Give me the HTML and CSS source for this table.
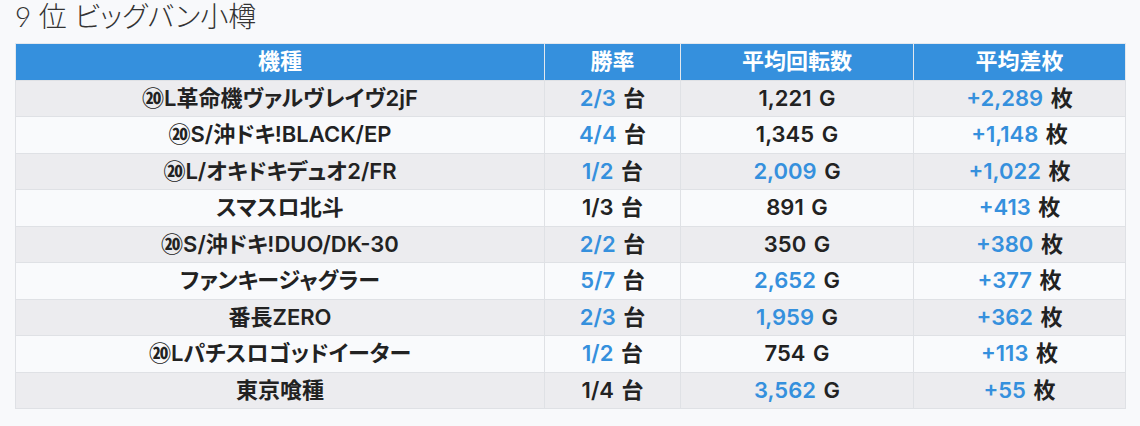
FILE: index.html
```html
<!DOCTYPE html>
<html lang="ja">
<head>
<meta charset="utf-8">
<link rel="stylesheet" href="styles.css">
</head>
<body>
<div class="page">
  <h2 class="title">9 位 ビッグバン小樽</h2>
  <table class="ranking">
    <colgroup>
      <col class="c-name"><col class="c-rate"><col class="c-spin"><col class="c-diff">
    </colgroup>
    <thead>
      <tr><th>機種</th><th>勝率</th><th>平均回転数</th><th>平均差枚</th></tr>
    </thead>
    <tbody>
      <tr><td>⑳L革命機ヴァルヴレイヴ2jF</td><td><span class="hl">2/3</span> 台</td><td>1,221 G</td><td><span class="hl">+2,289</span> 枚</td></tr>
      <tr><td>⑳S/沖ドキ!BLACK/EP</td><td><span class="hl">4/4</span> 台</td><td>1,345 G</td><td><span class="hl">+1,148</span> 枚</td></tr>
      <tr><td>⑳L/オキドキデュオ2/FR</td><td><span class="hl">1/2</span> 台</td><td><span class="hl">2,009</span> G</td><td><span class="hl">+1,022</span> 枚</td></tr>
      <tr><td>スマスロ北斗</td><td>1/3 台</td><td>891 G</td><td><span class="hl">+413</span> 枚</td></tr>
      <tr><td>⑳S/沖ドキ!DUO/DK-30</td><td><span class="hl">2/2</span> 台</td><td>350 G</td><td><span class="hl">+380</span> 枚</td></tr>
      <tr><td>ファンキージャグラー</td><td><span class="hl">5/7</span> 台</td><td><span class="hl">2,652</span> G</td><td><span class="hl">+377</span> 枚</td></tr>
      <tr><td>番長ZERO</td><td><span class="hl">2/3</span> 台</td><td><span class="hl">1,959</span> G</td><td><span class="hl">+362</span> 枚</td></tr>
      <tr><td>⑳Lパチスロゴッドイーター</td><td><span class="hl">1/2</span> 台</td><td>754 G</td><td><span class="hl">+113</span> 枚</td></tr>
      <tr><td>東京喰種</td><td>1/4 台</td><td><span class="hl">3,562</span> G</td><td><span class="hl">+55</span> 枚</td></tr>
    </tbody>
  </table>
</div>
</body>
</html>
```

FILE: styles.css
```css
html, body {
  margin: 0;
  padding: 0;
  background: #f8f9fb;
}
body {
  font-family: Inter, "Noto Sans CJK JP", sans-serif;
  font-feature-settings: "palt";
  color: #222;
}
.page {
  padding: 0 15px;
}
.title {
  margin: 0 0 11px;
  height: 32px;
  font-family: Lato, "Noto Sans CJK JP", sans-serif;
  font-weight: 300;
  font-size: 28px;
  line-height: 32px;
  color: #333;
}
.ranking {
  width: 1110px;
  border-collapse: collapse;
  table-layout: fixed;
  font-size: 22px;
}
.c-name { width: 529px; }
.c-rate { width: 136px; }
.c-spin { width: 233px; }
.c-diff { width: 212px; }
.ranking th,
.ranking td {
  border: 1px solid #dfe1e5;
  text-align: center;
  padding: 5px 8px;
  line-height: 25.5px;
  font-weight: 600;
  white-space: nowrap;
  word-spacing: 2px;
}
.ranking th {
  background: #3590dd;
  color: #fff;
  font-weight: 700;
  border-top-color: #e3e8ee;
  border-left-color: #e3e8ee;
  border-right-color: #e3e8ee;
  border-bottom-color: #dfe1e5;
}
.ranking th + th {
  border-left-color: #e6eef7;
}
.ranking tbody tr:nth-child(odd) td {
  background: #ececef;
}
.ranking tbody tr:nth-child(even) td {
  background: #f9fafc;
}
.hl {
  color: #3590dd;
}
```
